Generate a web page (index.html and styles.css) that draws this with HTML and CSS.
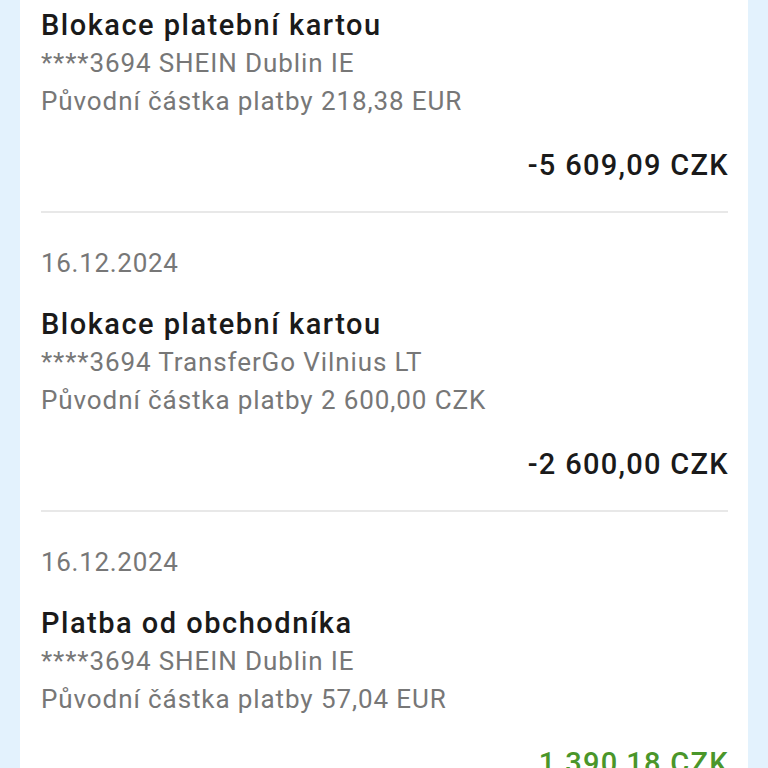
FILE: index.html
```html
<html>
<head>
<title>Pohyby na účtu</title>
<meta charset="utf-8">
<link rel="stylesheet" href="styles.css">
</head>
<body>
<div id="Container">
<div id="Content">

<div class="item first">
  <div class="title">Blokace platební kartou</div>
  <div class="info">****3694 SHEIN Dublin IE</div>
  <div class="info">Původní částka platby 218,38 EUR</div>
  <div class="amount">-5 609,09 CZK</div>
</div>

<div class="item">
  <div class="date">16.12.2024</div>
  <div class="title">Blokace platební kartou</div>
  <div class="info">****3694 TransferGo Vilnius LT</div>
  <div class="info">Původní částka platby 2 600,00 CZK</div>
  <div class="amount">-2 600,00 CZK</div>
</div>

<div class="item">
  <div class="date">16.12.2024</div>
  <div class="title">Platba od obchodníka</div>
  <div class="info">****3694 SHEIN Dublin IE</div>
  <div class="info">Původní částka platby 57,04 EUR</div>
  <div class="amount plus">1 390,18 CZK</div>
</div>

</div>
</div>
</body>
</html>
```

FILE: styles.css
```css
html, body { margin:0; padding:0; }
body { background:#e3f2fd; color:#1c1c1c; font-family:Roboto, "Liberation Sans", Arial, sans-serif; overflow:hidden; }
#Container { margin:0 20px; background:#fff; min-height:768px; }
#Content { padding:0 20px 0 21px; }

.item { padding:31px 0 27px; border-bottom:2px solid #e8e8e8; }
.item.first { padding-top:6px; }

.date { font-size:26px; line-height:38px; color:#777; letter-spacing:0.7px; margin-bottom:23px; }
.title { font-size:29px; line-height:38px; font-weight:500; color:#1a1a1a; letter-spacing:1.5px; }
.info { font-size:26px; line-height:38px; color:#777; letter-spacing:0.9px; }
.amount { font-size:29px; line-height:38px; font-weight:500; text-align:right; margin-top:26px; color:#1a1a1a; letter-spacing:1.3px; margin-right:-1px; }
.amount.plus { color:#4a962a; }
```
